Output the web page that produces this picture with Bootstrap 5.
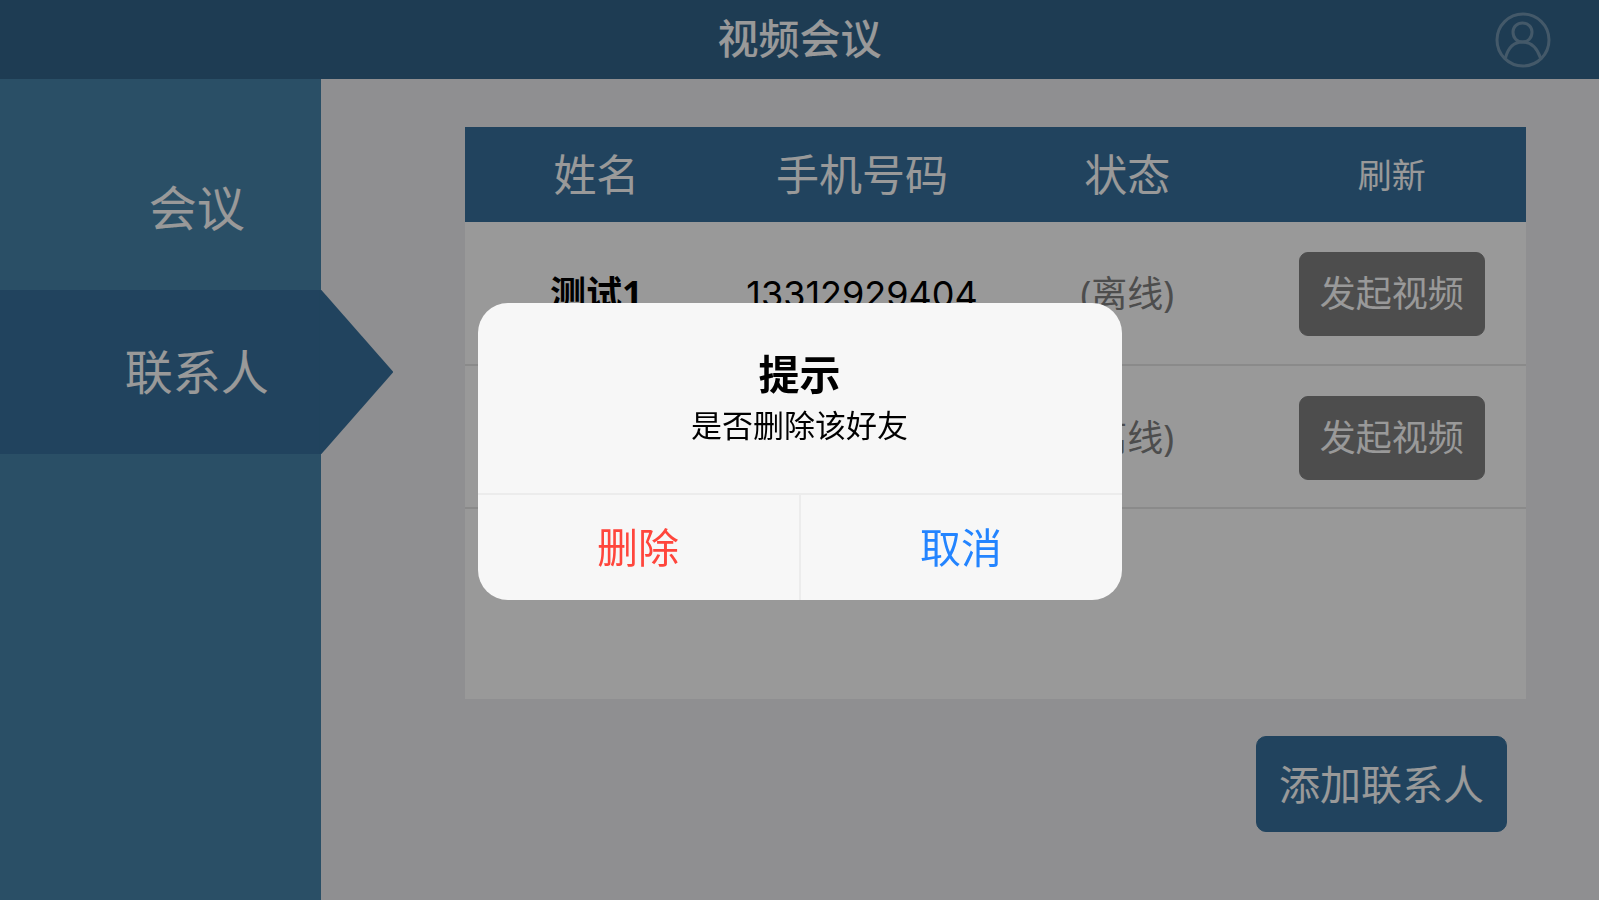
<!DOCTYPE html>
<html lang="zh-CN">
<head>
<meta charset="utf-8">
<meta name="viewport" content="width=device-width, initial-scale=1">
<title>视频会议</title>
<link href="https://cdn.jsdelivr.net/npm/bootstrap@5.3.0/dist/css/bootstrap.min.css" rel="stylesheet">
<style>
  body { font-family: "Noto Sans", "Noto Sans CJK SC", sans-serif; background: #efeff2; color: #000; }
  .topbar { background: #33658b; min-height: 79px; padding: 0 48px; color: #fff; }
  .topbar h1 { font-size: 41px; line-height: 76px; font-weight: 500; }
  .side { width: 20.1%; background: #4784aa; }
  .side a { color: #fff; font-size: 48px; line-height: 164px; padding: 0 0 0 72px; text-align: center; position: relative; }
  .side a:first-child { padding-top: 47px; }
  .side a.active { background: #37719d; }
  .side a.active::after { content: ""; position: absolute; left: 100%; top: 0; margin-left: -2px; width: 74px; height: 100%; background: #37719d; clip-path: polygon(0 0, 2px 0, 100% 50%, 2px 100%, 0 100%); }
  .content { padding: 48px 73px 0 144px; }
  .panel { background: #fff; min-height: 572px; }
  .contacts { table-layout: fixed; text-align: center; font-size: 36px; line-height: 54px; }
  .contacts th { height: 95px; background: #37719d; color: #fff; font-size: 43px; font-weight: 400; vertical-align: middle; padding: 0; }
  .contacts td { height: 143px; vertical-align: middle; padding: 2px 0 0; border-bottom: 2px solid #e6e6e6; }
  .contacts .who { font-weight: 700; }
  .contacts .phone { font-family: Inter, sans-serif; font-size: 36px; }
  .contacts .state { color: #808080; }
  .refresh { --bs-btn-font-size: 34px; --bs-btn-line-height: 50px; --bs-btn-color: #fff; --bs-btn-hover-color: #fff; }
  .call { --bs-btn-font-size: 36px; --bs-btn-line-height: 54px; --bs-btn-padding-x: 20px; --bs-btn-padding-y: 14px; --bs-btn-border-radius: 9px; --bs-btn-color: #fff; --bs-btn-bg: #808080; --bs-btn-border-color: #808080; }
  .add { --bs-btn-font-size: 41px; --bs-btn-line-height: 60px; --bs-btn-padding-x: 22px; --bs-btn-padding-y: 17px; --bs-btn-border-radius: 10px; --bs-btn-color: #fff; --bs-btn-bg: #37719d; --bs-btn-border-color: #37719d; margin: 37px 19px 0 0; }
  .shade { --bs-backdrop-opacity: .4; }
  .alert-box { --bs-modal-width: 644px; padding-top: 3px; }
  .alert-box .modal-content { background: #f7f7f7; border: 0; border-radius: 30px; overflow: hidden; }
  .alert-box .modal-body { padding: 43px 16px 45px; }
  .alert-box h2 { font-size: 41px; line-height: 56px; font-weight: 700; margin: 0; }
  .alert-box p { font-size: 31px; line-height: 46px; margin: 0; }
  .alert-box .modal-footer { padding: 0; border-top: 2px solid #ececec; }
  .alert-box .modal-footer .btn { flex: 1 1 0; margin: 0; border: 0; border-radius: 0; font-size: 41px; line-height: 60px; padding: 22px 0 23px; }
  .alert-box .modal-footer .btn + .btn { border-left: 2px solid #ececec; }
  .danger-text { color: #ff463c; }
  .cancel-text { color: #2384ff; }
</style>
</head>
<body>
<div class="d-flex flex-column min-vh-100">
  <header class="topbar d-flex align-items-start justify-content-between">
    <span style="width:56px"></span>
    <h1 class="m-0">视频会议</h1>
    <a href="#" aria-label="我的账户" class="d-block pt-2 mt-1">
      <svg class="d-block" width="56" height="56" viewBox="0 0 56 56" fill="none" stroke="#7295b0" stroke-width="3">
        <circle cx="28" cy="28" r="26"/>
        <path d="M27.500 11C33 11 37 15 37 20C37 26 33 30 27.500 30S18 26 18 20C18 15 22 11 27.500 11Z"/>
        <path d="M10.500 46C13 36 19 30 27.500 30S42 36 45.500 46"/>
      </svg>
    </a>
  </header>
  <div class="d-flex flex-grow-1">
    <nav class="side nav flex-column flex-nowrap flex-shrink-0">
      <a class="nav-link" href="#">会议</a>
      <a class="nav-link active" href="#" aria-current="page">联系人</a>
    </nav>
    <main class="content flex-grow-1">
      <div class="panel">
        <table class="contacts w-100">
          <colgroup><col style="width:24.7%"><col style="width:25.4%"><col style="width:24.6%"><col style="width:25.3%"></colgroup>
          <thead>
            <tr><th scope="col">姓名</th><th scope="col">手机号码</th><th scope="col">状态</th><th scope="col"><button type="button" class="btn refresh d-block mx-auto border-0 p-0">刷新</button></th></tr>
          </thead>
          <tbody>
            <tr><td class="who">测试1</td><td class="phone">13312929404</td><td class="state">(离线)</td><td><button type="button" class="btn call d-block mx-auto">发起视频</button></td></tr>
            <tr><td class="who"></td><td class="phone"></td><td class="state">(离线)</td><td><button type="button" class="btn call d-block mx-auto">发起视频</button></td></tr>
          </tbody>
        </table>
      </div>
      <div class="d-flex justify-content-end"><button type="button" class="btn add">添加联系人</button></div>
    </main>
  </div>
</div>

<div class="modal-backdrop show shade"></div>
<div class="modal d-block alert-box" role="dialog" aria-modal="true" aria-labelledby="alertTitle">
  <div class="modal-dialog modal-dialog-centered">
    <div class="modal-content">
      <div class="modal-body text-center">
        <h2 id="alertTitle">提示</h2>
        <p>是否删除该好友</p>
      </div>
      <div class="modal-footer flex-nowrap">
        <button type="button" class="btn danger-text">删除</button>
        <button type="button" class="btn cancel-text">取消</button>
      </div>
    </div>
  </div>
</div>
<script src="https://cdn.jsdelivr.net/npm/bootstrap@5.3.0/dist/js/bootstrap.bundle.min.js"></script>
</body>
</html>
